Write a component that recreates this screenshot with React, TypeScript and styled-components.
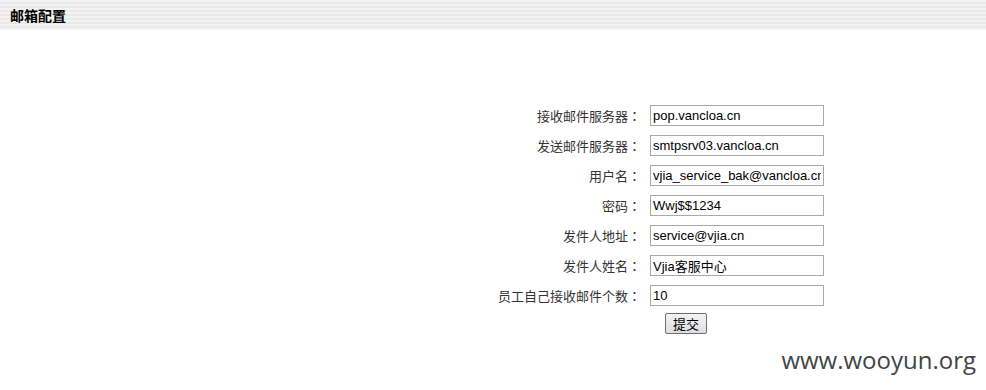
import styled, { createGlobalStyle } from 'styled-components';

const GlobalStyle = createGlobalStyle`
  body {
    margin: 0;
    background: #fff;
    font-family: 'Liberation Sans', 'Noto Sans CJK SC', sans-serif;
  }
`;

interface Field {
  label: string;
  value: string;
}

const fields: Field[] = [
  { label: '接收邮件服务器', value: 'pop.vancloa.cn' },
  { label: '发送邮件服务器', value: 'smtpsrv03.vancloa.cn' },
  { label: '用户名', value: 'vjia_service_bak@vancloa.cn' },
  { label: '密码', value: 'Wwj$$1234' },
  { label: '发件人地址', value: 'service@vjia.cn' },
  { label: '发件人姓名', value: 'Vjia客服中心' },
  { label: '员工自己接收邮件个数', value: '10' },
];

export default function App() {
  return (
    <Page>
      <GlobalStyle />
      <Header>
        <Title>邮箱配置</Title>
      </Header>
      <Form onSubmit={(e) => e.preventDefault()}>
        {fields.map((f) => (
          <Row key={f.label}>
            <Label>
              {f.label}
              <Colon>：</Colon>
            </Label>
            <Input defaultValue={f.value} />
          </Row>
        ))}
        <Row>
          <span />
          <ButtonCell>
            <SubmitButton type='submit'>提交</SubmitButton>
          </ButtonCell>
        </Row>
      </Form>
      <Watermark>www.wooyun.org</Watermark>
    </Page>
  );
}

const Page = styled.div`
  position: relative;
  width: 986px;
  height: 390px;
  overflow: hidden;
`;

const Header = styled.div`
  height: 30px;
  display: flex;
  align-items: center;
  padding-left: 10px;
  background: repeating-linear-gradient(
    to bottom,
    #f3f3f3 0px,
    #f3f3f3 2px,
    #e9e9e9 2px,
    #e9e9e9 4px
  );
`;

const Title = styled.h2`
  margin: 0;
  font-size: 14px;
  font-weight: bold;
  color: #000;
`;

const Form = styled.form`
  display: grid;
  grid-template-columns: 144px 174px;
  column-gap: 9px;
  row-gap: 9px;
  padding-top: 75px;
  padding-left: 497px;
`;

const Row = styled.div`
  display: contents;
`;

const Label = styled.label`
  font-size: 13px;
  color: #333;
  text-align: right;
  align-self: center;
  white-space: nowrap;
`;

const Colon = styled.span`
  font-family: 'Noto Sans CJK TC', 'Noto Sans CJK SC', sans-serif;
`;

const Input = styled.input`
  box-sizing: border-box;
  width: 174px;
  height: 21px;
  padding: 1px 2px;
  border: 1px solid #a9a9a9;
  font-family: 'Liberation Sans', 'Noto Sans CJK SC', sans-serif;
  font-size: 13px;
  color: #000;
  background: #fff;
  outline: none;
`;

const ButtonCell = styled.div`
  padding-left: 15px;
  margin-top: -2px;
`;

const SubmitButton = styled.button`
  box-sizing: border-box;
  width: 42px;
  height: 21px;
  padding: 0;
  border: 1px solid #707070;
  border-radius: 2px;
  background: linear-gradient(#f4f4f4, #dedede);
  font-family: 'Liberation Sans', 'Noto Sans CJK SC', sans-serif;
  font-size: 13px;
  color: #000;
`;

const Watermark = styled.div`
  position: absolute;
  right: 10px;
  bottom: 14px;
  font-family: 'Open Sans', sans-serif;
  font-size: 24px;
  color: #444;
`;
